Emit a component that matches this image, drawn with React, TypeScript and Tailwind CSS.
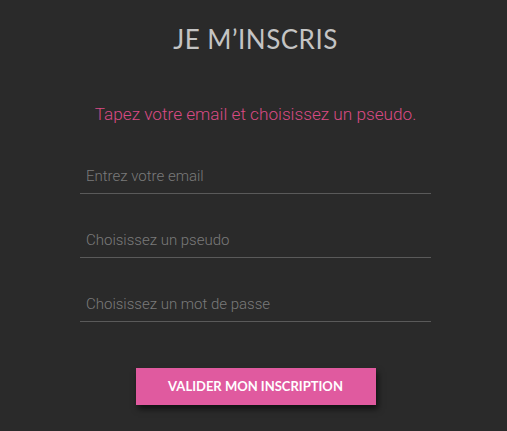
export default function App() {
  return (
    <main className="min-h-[431px] w-full bg-[#2a2a2a] flex flex-col items-center pt-[24px] pl-[4px]">
      <h1 className="text-[26px] text-[#c4c4c4] tracking-[0.5px] font-['Lato',sans-serif] leading-[30px]">
        JE M’INSCRIS
      </h1>
      <p className="mt-[49px] text-[17.2px] text-[#d94a84] font-['Roboto',sans-serif] font-light leading-[22px]">
        Tapez votre email et choisissez un pseudo.
      </p>
      <form className="mt-[33px] w-[351px] flex flex-col gap-[28px]">
        <input
          type="email"
          placeholder="Entrez votre email"
          className="h-[36px] border-b border-[#5a5a5a] bg-transparent px-[6px] text-[15px] font-['Roboto',sans-serif] font-light text-[#aaa] placeholder:text-[#7a7a7a] outline-none"
        />
        <input
          type="text"
          placeholder="Choisissez un pseudo"
          className="h-[36px] border-b border-[#5a5a5a] bg-transparent px-[6px] text-[15px] font-['Roboto',sans-serif] font-light text-[#aaa] placeholder:text-[#7a7a7a] outline-none"
        />
        <input
          type="password"
          placeholder="Choisissez un mot de passe"
          className="h-[36px] border-b border-[#5a5a5a] bg-transparent px-[6px] text-[15px] font-['Roboto',sans-serif] font-light text-[#aaa] placeholder:text-[#7a7a7a] outline-none"
        />
        <div className="flex justify-center mt-[18px]">
          <button
            type="button"
            className="w-[240px] h-[37px] bg-[#e05a9f] text-white text-[13px] font-bold font-['Lato',sans-serif] shadow-[2px_4px_6px_rgba(0,0,0,0.6)]"
          >
            VALIDER MON INSCRIPTION
          </button>
        </div>
      </form>
    </main>
  );
}
